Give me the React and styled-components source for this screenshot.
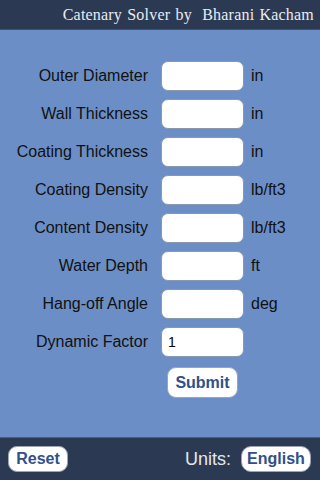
import React, { useState } from 'react';
import styled, { createGlobalStyle } from 'styled-components';

const GlobalStyle = createGlobalStyle`
  html, body {
    margin: 0;
    padding: 0;
    height: 100%;
  }
  body {
    font-family: "Liberation Sans", Arial, sans-serif;
    background: #6b8ec6;
  }
  #root {
    height: 100%;
  }
`;

const Screen = styled.div`
  display: flex;
  flex-direction: column;
  width: 320px;
  height: 480px;
  background: #6b8ec6;
`;

const Header = styled.header`
  height: 29px;
  background: #2b3a52;
  border-bottom: 1px solid #3f5270;
  display: flex;
  align-items: center;
  justify-content: flex-end;
  padding-right: 6px;
  color: #e8ecf2;
  font-family: "Liberation Serif", "Times New Roman", serif;
  font-size: 16px;
  letter-spacing: 0.2px;
  word-spacing: 1px;
`;

const Form = styled.div`
  flex: 1;
  display: flex;
  flex-direction: column;
  gap: 8px;
  padding-top: 31px;
`;

const Row = styled.div`
  display: grid;
  grid-template-columns: 148px 83px auto;
  align-items: center;
  height: 30px;
`;

const Label = styled.label`
  text-align: right;
  font-size: 16px;
  color: #111;
`;

const Field = styled.input`
  box-sizing: border-box;
  margin-left: 13px;
  width: 83px;
  height: 30px;
  border: 1px solid #8a98ad;
  border-radius: 7px;
  background: #fff;
  font-family: "Liberation Sans", Arial, sans-serif;
  font-size: 14px;
  padding: 0 6px;
  outline: none;
`;

const Unit = styled.span`
  margin-left: 20px;
  font-size: 16px;
  color: #111;
`;

const PillButton = styled.button`
  box-sizing: border-box;
  background: #fff;
  border: 1px solid #9aa6b8;
  border-radius: ${({ $radius }) => $radius || 9}px;
  color: #30508a;
  font-family: "Liberation Sans", Arial, sans-serif;
  font-weight: bold;
  font-size: 16px;
  width: ${({ $w }) => $w}px;
  height: ${({ $h }) => $h}px;
  padding: 0;
  cursor: pointer;
`;

const SubmitWrap = styled.div`
  padding-left: 167px;
  margin-top: 2px;
`;

const Footer = styled.footer`
  height: 42px;
  background: #2b3a52;
  border-top: 1px solid #4a5d7c;
  display: flex;
  align-items: center;
  padding: 0 9px 0 8px;
  gap: 10px;
`;

const Spacer = styled.div`
  flex: 1;
`;

const UnitsLabel = styled.span`
  color: #e4e8ee;
  font-size: 18px;
`;

const fields = [
  { label: 'Outer Diameter', unit: 'in' },
  { label: 'Wall Thickness', unit: 'in' },
  { label: 'Coating Thickness', unit: 'in' },
  { label: 'Coating Density', unit: 'lb/ft3' },
  { label: 'Content Density', unit: 'lb/ft3' },
  { label: 'Water Depth', unit: 'ft' },
  { label: 'Hang-off Angle', unit: 'deg' },
  { label: 'Dynamic Factor', unit: '', initial: '1' },
];

const App = () => {
  const [values, setValues] = useState(fields.map(f => f.initial || ''));

  const update = (i, v) => setValues(vals => vals.map((x, j) => (j === i ? v : x)));

  return (
    <>
      <GlobalStyle />
      <Screen>
        <Header>Catenary Solver by&nbsp; Bharani Kacham</Header>
        <Form>
          {fields.map(({ label, unit }, i) => (
            <Row key={label}>
              <Label>{label}</Label>
              <Field value={values[i]} onChange={e => update(i, e.target.value)} />
              <Unit>{unit}</Unit>
            </Row>
          ))}
          <SubmitWrap>
            <PillButton $w={71} $h={31} $radius={9}>Submit</PillButton>
          </SubmitWrap>
        </Form>
        <Footer>
          <PillButton $w={60} $h={26} $radius={9}>Reset</PillButton>
          <Spacer />
          <UnitsLabel>Units:</UnitsLabel>
          <PillButton $w={70} $h={26} $radius={10}>English</PillButton>
        </Footer>
      </Screen>
    </>
  );
};

export default App;
